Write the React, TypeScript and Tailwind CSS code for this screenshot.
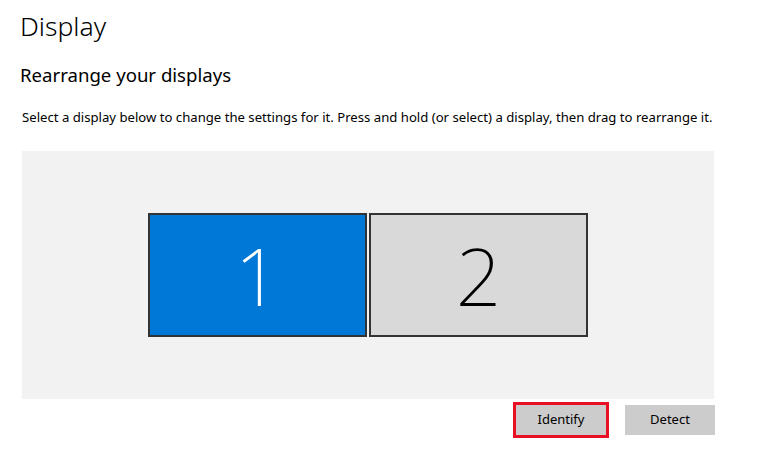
export default function App() {
  return (
    <div
      className="w-[778px] h-[474px] bg-white text-[#000] overflow-hidden"
      style={{ fontFamily: '"Segoe UI", "Noto Sans", "Open Sans", sans-serif' }}
    >
      {/* Header */}
      <h1 className="pl-[20px] pt-[6px] text-[26.5px] leading-[40px] font-light">Display</h1>
      <h2 className="pl-[20px] mt-[15px] text-[18.6px] leading-[28px] font-normal">Rearrange your displays</h2>
      <p className="pl-[22px] mt-[19px] text-[13.15px] leading-[18px]">
        Select a display below to change the settings for it. Press and hold (or select) a display, then drag to rearrange it.
      </p>

      {/* Display canvas */}
      <div className="ml-[22px] mt-[25px] w-[692px] h-[248px] bg-[#f2f2f2] flex items-center justify-center gap-[2px]">
        <div className="w-[219px] h-[124px] border-2 border-[#333] bg-[#0078d7] flex items-center justify-center">
          <span className="text-[80px] leading-none font-extralight text-white">1</span>
        </div>
        <div className="w-[219px] h-[124px] border-2 border-[#333] bg-[#d9d9d9] flex items-center justify-center">
          <span className="text-[80px] leading-none font-extralight text-black">2</span>
        </div>
      </div>

      {/* Actions */}
      <div className="w-[715px] mt-[6px] flex justify-end gap-[19px]">
        <button className="w-[90px] h-[30px] bg-[#cccccc] text-[13px] outline-[3px] outline-solid outline-[#e81123]">
          Identify
        </button>
        <button className="w-[90px] h-[30px] bg-[#cccccc] text-[13px]">Detect</button>
      </div>
    </div>
  );
}
